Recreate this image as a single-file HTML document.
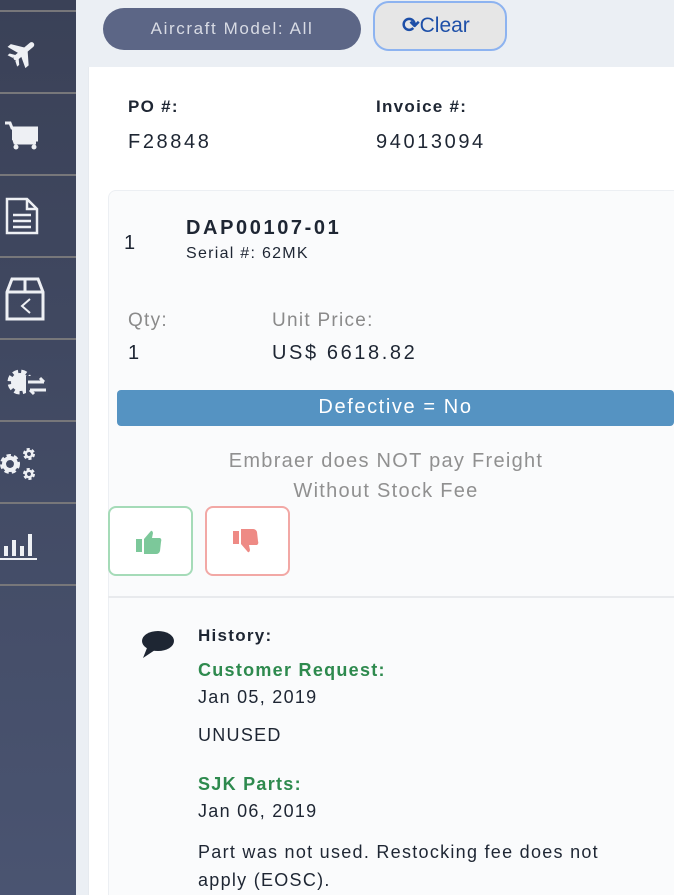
<!DOCTYPE html>
<html style="width:674px;height:895px;overflow:hidden"><head><meta charset="utf-8"><style>
*{margin:0;padding:0;box-sizing:border-box}
body{width:674px;height:895px;overflow:hidden;background:#ebeff4;font-family:"Liberation Sans",sans-serif;color:#1e2633;position:relative;letter-spacing:.08em}
.side{position:absolute;left:0;top:0;width:76px;height:895px;background:linear-gradient(#3a4157,#4a5471)}
.sep{position:absolute;left:0;width:76px;height:2px;background:#77777a}
.t{position:absolute;white-space:nowrap}
.w{letter-spacing:.13em}
.panel{position:absolute;left:88px;top:67px;width:586px;height:828px;background:#fff;border-left:1px solid #e6eaef}
.card{position:absolute;left:108px;top:190px;width:580px;height:705px;background:#fafbfc;border:1px solid #eceff3;border-bottom:none;border-radius:8px 8px 0 0}
</style></head><body>
<div class="side">
<div class="sep" style="top:10px"></div><div class="sep" style="top:92px"></div><div class="sep" style="top:174px"></div><div class="sep" style="top:256px"></div><div class="sep" style="top:338px"></div><div class="sep" style="top:420px"></div><div class="sep" style="top:502px"></div><div class="sep" style="top:584px"></div>
<svg style="position:absolute;left:7px;top:36px" width="32" height="32" viewBox="0 0 30 30"><g transform="rotate(-40 15 15)" fill="#eef0f4"><rect x="4" y="12.5" width="24" height="5" rx="2.5"/><path d="M11 13 L7 2 H11 L19 13 Z M11 17 L7 28 H11 L19 17 Z M4 13 L2 8 H4.5 L8 13 Z M4 17 L2 22 H4.5 L8 17 Z"/></g></svg>
<svg style="position:absolute;left:4px;top:118px" width="34" height="34" viewBox="0 0 34 34"><path d="M1 5 H6 L8 10 H34 V22 H10 L11 25 H32" fill="none" stroke="#eef0f4" stroke-width="3"/><rect x="8" y="10" width="26" height="12" fill="#eef0f4"/><circle cx="12" cy="29" r="2.5" fill="#eef0f4"/><circle cx="30" cy="29" r="2.5" fill="#eef0f4"/></svg>
<svg style="position:absolute;left:5px;top:197px" width="34" height="38" viewBox="0 0 34 38"><path d="M2 2 H22 L32 12 V36 H2 Z M22 2 V12 H32" fill="none" stroke="#eef0f4" stroke-width="2.5"/><path d="M8 18 H26 M8 24 H26 M8 30 H26" stroke="#eef0f4" stroke-width="2.5"/></svg>
<svg style="position:absolute;left:4px;top:275px" width="42" height="48" viewBox="0 0 42 48"><path d="M3 17 L8 4 H34 L39 17 V44 H3 Z M3 17 H39 M21 4 V17" fill="none" stroke="#eef0f4" stroke-width="3"/><path d="M26 24 L18 31 L26 38" fill="none" stroke="#eef0f4" stroke-width="2"/></svg>
<svg style="position:absolute;left:4px;top:362px" width="44" height="40" viewBox="0 0 44 40"><circle cx="16" cy="20" r="10" fill="none" stroke="#eef0f4" stroke-width="5" stroke-dasharray="5 3"/><circle cx="16" cy="20" r="9" fill="#eef0f4"/><rect x="22" y="14" width="22" height="20" fill="#434b63"/><path d="M24 20 H40 M36 16 L40 20 M26 28 H42 M26 28 L30 32" stroke="#eef0f4" stroke-width="3" fill="none"/></svg>
<svg style="position:absolute;left:0;top:444px" width="40" height="38" viewBox="0 0 40 38"><circle cx="10" cy="20" r="7" fill="none" stroke="#eef0f4" stroke-width="6" stroke-dasharray="3.5 2.5"/><circle cx="10" cy="20" r="6" fill="none" stroke="#eef0f4" stroke-width="4"/><circle cx="29" cy="10" r="4" fill="none" stroke="#eef0f4" stroke-width="4" stroke-dasharray="2.5 1.7"/><circle cx="29" cy="10" r="3.2" fill="none" stroke="#eef0f4" stroke-width="2.4"/><circle cx="29" cy="30" r="4" fill="none" stroke="#eef0f4" stroke-width="4" stroke-dasharray="2.5 1.7"/><circle cx="29" cy="30" r="3.2" fill="none" stroke="#eef0f4" stroke-width="2.4"/></svg>
<svg style="position:absolute;left:0;top:526px" width="40" height="36" viewBox="0 0 40 36"><path d="M4 20 H8 V30 H4 Z M12 14 H16 V30 H12 Z M20 20 H24 V30 H20 Z M28 8 H32 V30 H28 Z" fill="#eef0f4"/><rect x="0" y="32" width="37" height="2" fill="#eef0f4"/></svg>
</div>
<div style="position:absolute;left:103px;top:8px;width:258px;height:42px;border-radius:21px;background:#5c6686;color:#d8dbe4;font-size:17px;letter-spacing:1.6px;text-align:center;line-height:42px">Aircraft Model: All</div>
<div style="position:absolute;left:373px;top:1px;width:134px;height:50px;border-radius:16px;background:#e6e6e6;border:2px solid #8db3f0;color:#1d4fa8;font-size:21px;letter-spacing:0;line-height:46px;padding-left:27px"><b>&#10227;</b>Clear</div>
<div class="panel"></div>
<div class="t" style="left:128px;top:97px;font-size:17px;font-weight:bold">PO #:</div>
<div class="t w" style="left:128px;top:131px;font-size:20px">F28848</div>
<div class="t" style="left:376px;top:97px;font-size:17px;font-weight:bold">Invoice #:</div>
<div class="t w" style="left:376px;top:131px;font-size:20px">94013094</div>
<div class="card"></div>
<div class="t" style="left:124px;top:232px;font-size:20px">1</div>
<div class="t w" style="left:186px;top:217px;font-size:20px;font-weight:bold">DAP00107-01</div>
<div class="t" style="left:186px;top:245px;font-size:16px">Serial #: 62MK</div>
<div class="t" style="left:128px;top:310px;font-size:19px;color:#8a8a8a">Qty:</div>
<div class="t" style="left:128px;top:342px;font-size:20px">1</div>
<div class="t" style="left:272px;top:310px;font-size:19px;color:#8a8a8a">Unit Price:</div>
<div class="t w" style="left:272px;top:342px;font-size:20px">US$ 6618.82</div>
<div style="position:absolute;left:117px;top:390px;width:557px;height:36px;background:#5593c2;border-radius:4px;color:#fff;font-size:20px;text-align:center;line-height:35px;letter-spacing:.08em">Defective = No</div>
<div class="t" style="left:108px;width:556px;text-align:center;top:446px;font-size:20px;color:#909090;line-height:30px">Embraer does NOT pay Freight<br>Without Stock Fee</div>
<div style="position:absolute;left:108px;top:506px;width:85px;height:70px;border:2px solid #a5dbb8;border-radius:8px;background:#fff"></div>
<svg style="position:absolute;left:135px;top:528px" width="30" height="30" viewBox="0 0 30 30"><rect x="1" y="11" width="6" height="13" fill="#7cc89a"/><path d="M9 11 L15 4 Q17 1 18 5 L17 10 H25 Q27 11 26 14 L25 23 Q24 26 21 26 H9 Z" fill="#7cc89a"/></svg>
<div style="position:absolute;left:205px;top:506px;width:85px;height:70px;border:2px solid #f2a8a5;border-radius:8px;background:#fff"></div>
<svg style="position:absolute;left:232px;top:528px" width="30" height="30" viewBox="0 0 30 30"><rect x="1" y="3" width="6" height="13" fill="#ee8a85"/><path d="M9 16 L15 23 Q17 26 18 22 L17 17 H25 Q27 16 26 13 L25 4 Q24 1 21 1 H9 Z" fill="#ee8a85"/></svg>
<div style="position:absolute;left:108px;top:596px;width:566px;height:2px;background:#e8eaed"></div>
<svg style="position:absolute;left:141px;top:630px" width="34" height="30" viewBox="0 0 34 30"><ellipse cx="17" cy="11" rx="16" ry="10" fill="#1e2633"/><path d="M6 18 L2 28 L14 20 Z" fill="#1e2633"/></svg>
<div class="t" style="left:198px;top:626px;font-size:17px;font-weight:bold">History:</div>
<div class="t" style="left:198px;top:660px;font-size:18px;font-weight:bold;color:#2e8a4e">Customer Request:</div>
<div class="t" style="left:198px;top:687px;font-size:18px">Jan 05, 2019</div>
<div class="t" style="left:198px;top:725px;font-size:18px">UNUSED</div>
<div class="t" style="left:198px;top:774px;font-size:18px;font-weight:bold;color:#2e8a4e">SJK Parts:</div>
<div class="t" style="left:198px;top:801px;font-size:18px">Jan 06, 2019</div>
<div class="t" style="left:198px;top:838px;font-size:18px;line-height:28px">Part was not used. Restocking fee does not<br>apply (EOSC).</div>
</body></html>
